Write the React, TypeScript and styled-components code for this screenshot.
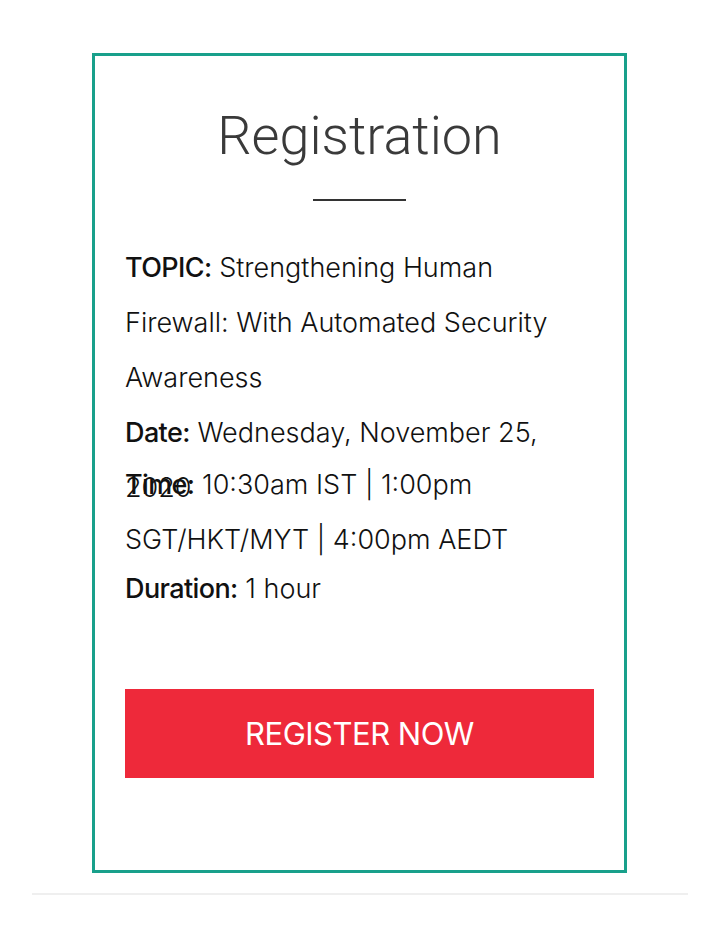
import React from 'react'
import styled, { createGlobalStyle } from 'styled-components'

const GlobalStyle = createGlobalStyle`
  html, body {
    margin: 0;
    padding: 0;
    background: #fff;
  }
  body {
    font-family: Inter, 'Liberation Sans', sans-serif;
    color: #111;
  }
`

const Page = styled.div`
  width: 656px;
  margin: 0 auto;
  padding-top: 53px;
  border-bottom: 2px solid #efefef;
  padding-bottom: 20px;
`

const Card = styled.section`
  width: 535px;
  box-sizing: border-box;
  margin: 0 auto;
  border: 3px solid #18a08b;
  padding: 44px 30px 92px;
`

const Title = styled.h2`
  margin: 0;
  text-align: center;
  font-family: Roboto, 'Liberation Sans', sans-serif;
  font-weight: 300;
  font-size: 54px;
  line-height: 72px;
  color: #3a3a3a;
`

const Divider = styled.hr`
  width: 93px;
  height: 2px;
  margin: 27px auto 39px;
  border: none;
  background: #333;
`

const Info = styled.p<{ $height?: number; $lineHeight?: number }>`
  margin: 0;
  font-size: 27px;
  font-weight: 300;
  line-height: ${(p) => p.$lineHeight ?? 55}px;
  height: ${(p) => (p.$height ? `${p.$height}px` : 'auto')};
  b {
    font-weight: 500;
    letter-spacing: -0.6px;
  }
`

const RegisterButton = styled.a`
  display: flex;
  align-items: center;
  justify-content: center;
  height: 89px;
  margin-top: 78px;
  background: #ee293a;
  color: #fff;
  font-family: Inter, 'Liberation Sans', sans-serif;
  font-size: 31px;
  letter-spacing: -0.5px;
  text-decoration: none;
  text-transform: uppercase;
`

export default function App() {
  return (
    <>
      <GlobalStyle />
      <Page>
        <Card>
          <Title>Registration</Title>
          <Divider />
          <Info>
            <b>TOPIC:</b> Strengthening Human Firewall: With Automated Security
            Awareness
          </Info>
          <Info $height={52}>
            <b>Date:</b> Wednesday, November 25, 2020
          </Info>
          <Info>
            <b>Time:</b> 10:30am IST | 1:00pm SGT/HKT/MYT | 4:00pm AEDT
          </Info>
          <Info $lineHeight={44}>
            <b>Duration:</b> 1 hour
          </Info>
          <RegisterButton href="#">Register Now</RegisterButton>
        </Card>
      </Page>
    </>
  )
}
